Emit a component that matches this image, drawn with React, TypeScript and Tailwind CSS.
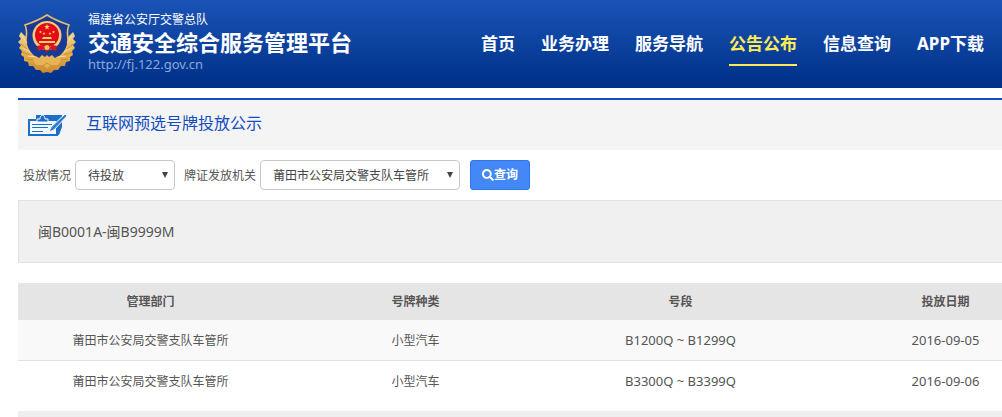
import React, { useState } from 'react';
import { FaSearch } from 'react-icons/fa';

interface PlateRange {
  id: number;
  office: string;
  type: string;
  range: string;
  date: string;
}

const navItems = ['首页', '业务办理', '服务导航', '公告公布', '信息查询', 'APP下载'];

const plateRanges: PlateRange[] = [
  { id: 1, office: '莆田市公安局交警支队车管所', type: '小型汽车', range: 'B1200Q ~ B1299Q', date: '2016-09-05' },
  { id: 2, office: '莆田市公安局交警支队车管所', type: '小型汽车', range: 'B3300Q ~ B3399Q', date: '2016-09-06' },
];

const star = (cx: number, cy: number, r: number) =>
  Array.from({ length: 10 }, (_, i) => {
    const radius = i % 2 ? r * 0.4 : r;
    const angle = (Math.PI / 5) * i - Math.PI / 2;
    return `${cx + radius * Math.cos(angle)},${cy + radius * Math.sin(angle)}`;
  }).join(' ');

const PoliceBadge = () => (
  <svg width="58" height="60" viewBox="0 0 58 60" aria-hidden="true" className="shrink-0">
    <defs>
      <linearGradient id="gold" x1="0" y1="0" x2="0" y2="1">
        <stop offset="0" stopColor="#f3d48c" />
        <stop offset="0.6" stopColor="#e2ab48" />
        <stop offset="1" stopColor="#c98a2c" />
      </linearGradient>
    </defs>
    {/* wreath */}
    <path
      d="M3 18L1 22L3 25L0 28L3 31L1 34L4 37L3 41L6 43L6 47L10 48L11 52L15 52L18 56L22 56L25 59L29 58L33 59L36 56L40 56L43 52L47 52L48 48L52 47L52 43L55 41L54 37L57 34L55 31L58 28L55 25L57 22L55 18L50 23L48 36L40 45L29 49L18 45L10 36L8 23Z"
      fill="url(#gold)"
    />
    {/* shield */}
    <path
      d="M29 1C23 5 16 8 7 11C10 17 8 22 8 27C8 38 18 46 29 49C40 46 50 38 50 27C50 22 48 17 51 11C42 8 35 5 29 1Z"
      fill="#183a94"
      stroke="#e8bd68"
      strokeWidth="1.6"
    />
    <path d="M3 30L9 35M4 38L12 41M8 45L17 46M16 51L23 49M55 30L49 35M54 38L46 41M50 45L41 46M42 51L35 49" stroke="#c98f3a" strokeWidth="1" />
    <path d="M4 22L9 29M5 34L12 38M10 42L18 43M54 22L49 29M53 34L46 38M48 42L40 43" stroke="#f8dea0" strokeWidth="1" />
    {/* gear */}
    <path d="M15 46L18 42L21 44L24 41L27 43L29 41L31 43L34 41L37 44L40 42L43 46L40 51L33 51L29 54L25 51L18 51Z" fill="#e6b455" />
    <path d="M23 53L29 49L35 53" stroke="#c98f3a" strokeWidth="1" fill="none" />
    {/* national emblem */}
    <circle cx="29" cy="21.5" r="14.5" fill="#f0cc80" />
    <circle cx="29" cy="21" r="12" fill="#e30b17" />
    <polygon points={star(29, 13, 3)} fill="#ffe066" />
    <polygon points={star(22.5, 18, 1.6)} fill="#ffe066" />
    <polygon points={star(26, 19.5, 1.6)} fill="#ffe066" />
    <polygon points={star(32, 19.5, 1.6)} fill="#ffe066" />
    <polygon points={star(35.5, 18, 1.6)} fill="#ffe066" />
    <path d="M25 23H33L34 25H24ZM21 27H37V29H21Z" fill="#f8d468" />
    <path d="M19 32L23 31L26 33L29 31L32 33L35 31L39 32L38 37L33 35L29 38L25 35L20 37Z" fill="#d81420" />
    <circle cx="29" cy="33.5" r="2.5" fill="#f0c25c" />
  </svg>
);

const NoteIcon = () => (
  <svg width="40" height="24" viewBox="0 0 40 24" aria-hidden="true" className="shrink-0">
    <path d="M8 2H34V14L31 22H8Z" fill="#1b6fc9" />
    <path d="M1 7H29V22H1Z" fill="#f4f8fc" stroke="#1b6fc9" strokeWidth="2" />
    <path d="M9 9V6H12C12 1 17 1 17 6H20V9Z" fill="#1b6fc9" stroke="#f4f8fc" strokeWidth="1" />
    <path d="M4 11.5H24M4 14.5H20M4 18.5H15" stroke="#1b6fc9" strokeWidth="1" />
    <path d="M37 1L39 3L26 17L21 19L23 14Z" fill="#3f8cd8" stroke="#f4f8fc" strokeWidth="1" />
    <path d="M38 2L23 17" stroke="#1b6fc9" strokeWidth="1" />
  </svg>
);

interface SelectFieldProps {
  id: string;
  label: string;
  options: string[];
  value: string;
  onChange: (value: string) => void;
  widthClass: string;
}

const SelectField: React.FC<SelectFieldProps> = ({ id, label, options, value, onChange, widthClass }) => (
  <div className="flex items-center gap-1">
    <label htmlFor={id} className="pt-[2px]">{label}</label>
    <div className={`relative ${widthClass}`}>
      <select
        id={id}
        value={value}
        onChange={(e) => onChange(e.target.value)}
        className="block h-[30px] w-full appearance-none rounded border border-[#c8c8c8] bg-white pt-[2px] pr-6 pl-3 text-xs text-[#444]"
      >
        {options.map((option) => (
          <option key={option}>{option}</option>
        ))}
      </select>
      <svg width="6" height="6" viewBox="0 0 6 6" aria-hidden="true" className="pointer-events-none absolute top-3 right-[7px]">
        <path d="M0 0H6L3 6Z" fill="#444" />
      </svg>
    </div>
  </div>
);

const App = () => {
  const [status, setStatus] = useState('待投放');
  const [office, setOffice] = useState('莆田市公安局交警支队车管所');

  return (
    <div className="overflow-hidden bg-white font-['Noto_Sans','Noto_Sans_CJK_SC',sans-serif] text-xs text-[#555]">
      <header className="flex h-[88px] justify-between bg-linear-to-b from-[#1b54b7] to-[#002f87] px-[18px] text-white">
        <div className="flex items-center gap-3">
          <PoliceBadge />
          <div className="pb-1 whitespace-nowrap">
            <p className="leading-4">福建省公安厅交警总队</p>
            <h1 className="text-[22px] leading-7 font-bold">交通安全综合服务管理平台</h1>
            <p className="text-[13px] leading-4 text-[#8aa9d8]">http://fj.122.gov.cn</p>
          </div>
        </div>
        <nav className="flex items-center gap-[26px] text-[17px] leading-6 font-bold whitespace-nowrap">
          {navItems.map((item) => (
            <a
              key={item}
              href="#"
              className={
                item === '公告公布'
                  ? 'border-y-2 border-t-transparent border-b-[#ffeb55] py-2 text-[#ffeb55]'
                  : 'border-y-2 border-transparent py-2'
              }
            >
              {item}
            </a>
          ))}
        </nav>
      </header>

      <main className="mt-[10px] ml-[18px]">
        <div className="flex h-[52px] items-center gap-[18px] border-t-2 border-[#124cc0] bg-[#f4f4f4] pl-[10px]">
          <NoteIcon />
          <h2 className="pb-1 text-base leading-6 font-normal text-[#124cc0]">互联网预选号牌投放公示</h2>
        </div>

        <form className="flex items-center py-[10px] pl-[5px]" onSubmit={(e) => e.preventDefault()}>
          <div className="flex items-center gap-[9px]">
            <SelectField
              id="status"
              label="投放情况"
              options={['待投放', '已投放']}
              value={status}
              onChange={setStatus}
              widthClass="w-[100px]"
            />
            <SelectField
              id="office"
              label="牌证发放机关"
              options={['莆田市公安局交警支队车管所']}
              value={office}
              onChange={setOffice}
              widthClass="w-[200px]"
            />
          </div>
          <button
            type="submit"
            className="ml-[10px] flex h-[30px] items-center rounded-[3px] border border-[#2f78e8] bg-[#4488f7] px-[11px] font-bold text-white"
          >
            <FaSearch size={12} />
            查询
          </button>
        </form>

        <p className="border border-r-0 border-[#e2e2e2] bg-[#f0f0f0] py-5 pl-[19px] text-sm leading-[21px]">
          闽B0001A-闽B9999M
        </p>

        <table className="mt-5 w-full min-w-[1060px] table-fixed border-separate border-spacing-0 text-center">
          <thead>
            <tr className="h-[37px] bg-[#e5e5e5]">
              <th>管理部门</th>
              <th>号牌种类</th>
              <th>号段</th>
              <th>投放日期</th>
            </tr>
          </thead>
          <tbody>
            {plateRanges.map((row) => (
              <tr
                key={row.id}
                className="h-[41px] odd:bg-[#f9f9f9] [&>td]:border-b [&>td]:border-[#e2e2e2] [&>td]:pt-[2px] last:[&>td]:border-transparent"
              >
                <td>{row.office}</td>
                <td>{row.type}</td>
                <td className="text-[13px]">{row.range}</td>
                <td className="text-[13px]">{row.date}</td>
              </tr>
            ))}
          </tbody>
        </table>
        <div className="mt-[9px] h-[6px] bg-[#eee]" />
      </main>
    </div>
  );
};

export default App;
